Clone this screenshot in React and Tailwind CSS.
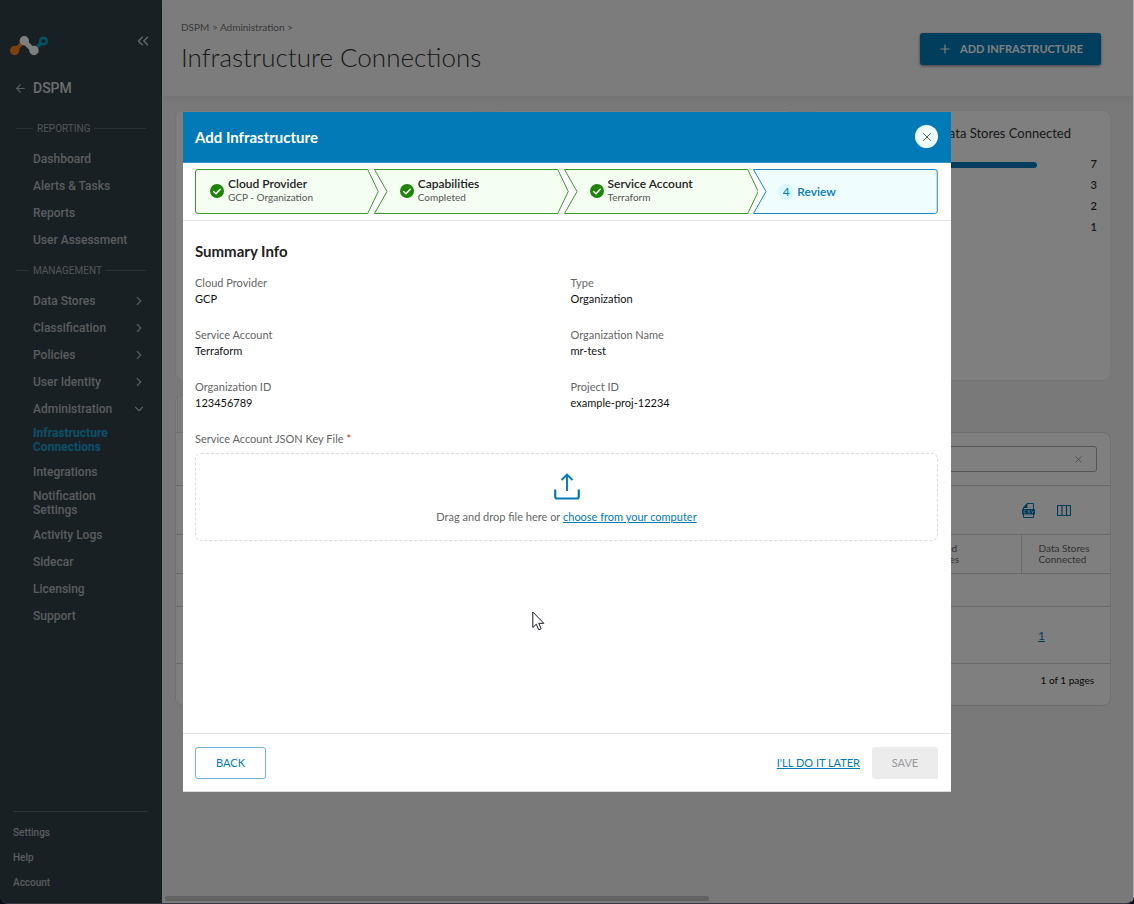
import { useState } from 'react'
import { ArrowLeft, ChevronDown, ChevronRight, ChevronsLeft, Plus, X } from 'lucide-react'

const reporting = ['Dashboard', 'Alerts & Tasks', 'Reports', 'User Assessment']
const management = ['Data Stores', 'Classification', 'Policies', 'User Identity']
const administration = [
  'Infrastructure Connections',
  'Integrations',
  'Notification Settings',
  'Activity Logs',
  'Sidecar',
  'Licensing',
  'Support',
]
const bottomLinks = ['Settings', 'Help', 'Account']
const connected = [7, 3, 2, 1]

const steps = [
  { title: 'Cloud Provider', note: 'GCP - Organization' },
  { title: 'Capabilities', note: 'Completed' },
  { title: 'Service Account', note: 'Terraform' },
  { title: 'Review' },
]

const summary = [
  ['Cloud Provider', 'GCP'],
  ['Type', 'Organization'],
  ['Service Account', 'Terraform'],
  ['Organization Name', 'mr-test'],
  ['Organization ID', '123456789'],
  ['Project ID', 'example-proj-12234'],
]

function Logo() {
  return (
    <svg width="38" height="20" viewBox="0 0 38 20" aria-hidden="true">
      <path d="M5 14.500L13 6" stroke="#f58220" strokeWidth="4" />
      <circle cx="4.700" cy="14.500" r="4.700" fill="#f58220" />
      <path d="M24 14L31 7" stroke="#00a5c8" strokeWidth="3.500" />
      <circle cx="33.500" cy="5" r="3.300" fill="none" stroke="#00a5c8" strokeWidth="2.600" />
      <path d="M14 5L24 15" stroke="#fff" strokeWidth="5" />
      <circle cx="14.300" cy="4.700" r="4.700" fill="#fff" />
      <circle cx="24" cy="14.500" r="4.700" fill="#fff" />
    </svg>
  )
}

function SectionLabel({ children, indent }) {
  return (
    <div className="flex h-[34px] items-center text-[10px] text-[#a2a8ab]">
      <span className={`h-px bg-[#57646a] ${indent ? 'w-[17px]' : 'w-[13px]'}`} />
      <h2 className="px-1">{children}</h2>
      <span className="h-px flex-1 bg-[#57646a]" />
    </div>
  )
}

function NavItem({ label, active, icon: Icon }) {
  return (
    <li>
      <a
        href="#"
        className={`flex min-h-[27px] items-center justify-between py-1 pl-[17px] text-[12px] leading-[14px] ${active ? 'font-extrabold text-[#1a9acb]' : 'font-medium text-[#b4b8ba]'}`}
      >
        <span className="max-w-[100px]">{label}</span>
        {Icon && <Icon size={14} />}
      </a>
    </li>
  )
}

function Sidebar() {
  return (
    <aside className="flex w-[162px] shrink-0 flex-col bg-[#324148] font-['Roboto',sans-serif]">
      <div className="flex h-[65px] items-start justify-between pt-9 pr-2.5 pl-2.5">
        <Logo />
        <button aria-label="Collapse menu" className="-mt-1 text-[#c8cccd]">
          <ChevronsLeft size={18} />
        </button>
      </div>
      <a href="#" className="flex h-[46px] items-center gap-1.5 pl-3.5 text-[14px] font-medium text-[#d8dadb]">
        <ArrowLeft size={13} className="text-[#b4b8ba]" />
        DSPM
      </a>
      <nav className="pr-4 pl-4">
        <SectionLabel indent>REPORTING</SectionLabel>
        <ul>
          {reporting.map(label => <NavItem key={label} label={label} />)}
        </ul>
        <SectionLabel>MANAGEMENT</SectionLabel>
        <ul>
          {management.map(label => <NavItem key={label} label={label} icon={ChevronRight} />)}
          <NavItem label="Administration" icon={ChevronDown} />
          {administration.map((label, i) => <NavItem key={label} label={label} active={i === 0} />)}
        </ul>
      </nav>
      <ul className="mt-auto mr-3.5 mb-2 ml-[13px] border-t border-[#5a686e] pt-2">
        {bottomLinks.map(label => (
          <li key={label}>
            <a href="#" className="flex h-[25px] items-center text-[10px] font-medium text-[#b4b8ba]">{label}</a>
          </li>
        ))}
      </ul>
    </aside>
  )
}

function CsvIcon() {
  return (
    <svg width="13" height="15" viewBox="0 0 13 15" fill="none" aria-hidden="true">
      <path d="M1.500 6V4.500L5 .500h6.500V6M1.500 11v3.500h10V11" stroke="#0379b7" />
      <path d="M1 5L5.500 0v5z" fill="#0379b7" />
      <path d="M0 6h13v5.500H0z" fill="#0379b7" />
      <path d="M4 7.500H2v2.500h2M8 7.500H6v1h1.500V10H5.500M9.500 7.500l1 2.500 1-2.500" stroke="#fff" strokeWidth=".5" />
    </svg>
  )
}

function ColumnsIcon() {
  return (
    <svg width="14" height="11" viewBox="0 0 14 11" fill="none" stroke="#0379b7" aria-hidden="true">
      <path d="M.500.500h13v10H.500zM5 .500v10M9.500.500v10" strokeWidth="1.200" />
    </svg>
  )
}

function Page() {
  return (
    <main className="flex min-w-0 flex-1 flex-col bg-[#f2f2f2]">
      <header className="flex h-24 shrink-0 items-center justify-between bg-[#f9f9f9] pr-8 pl-[19px] shadow-[0_2px_10px_rgba(0,0,0,0.06)]">
        <div className="pb-1">
          <p className="text-[10px] leading-4 text-[#777]">DSPM &gt; Administration &gt;</p>
          <h1 className="pt-1.5 text-[26px] leading-8 font-light text-[#333]">Infrastructure Connections</h1>
        </div>
        <button className="mt-0.5 flex h-8 items-center gap-2 rounded-[3px] bg-[#037ab8] px-[18px] text-[11px] font-bold text-white shadow-[0_1px_3px_rgba(0,0,0,0.5)]">
          <Plus size={14} />
          ADD INFRASTRUCTURE
        </button>
      </header>

      <div className="pt-3.5 pr-[22px] pl-[13px]">
        <div className="grid grid-cols-3 gap-3">
          <section className="h-[271px] rounded-lg border border-[#ebebeb] bg-white" />
          <section className="h-[271px] rounded-lg border border-[#ebebeb] bg-white" />
          <section className="h-[271px] rounded-lg border border-[#ebebeb] bg-white pt-3 pr-[13px] pl-3">
            <h2 className="pr-[26px] text-right text-[13px] leading-5 text-[#333]">Data Stores Connected</h2>
            <ul className="pt-[11px]">
              {connected.map(n => (
                <li key={n} className="flex h-[21px] items-center">
                  <span className="flex-1">
                    <span className="block h-1.5 rounded-full bg-[#037ab8]" style={{ width: `${(n / 7) * 100}%` }} />
                  </span>
                  <span className="w-[60px] text-right text-[11px] font-semibold text-[#333]">{n}</span>
                </li>
              ))}
            </ul>
          </section>
        </div>

        <div className="mt-[13px] h-[38px] w-40 rounded-t-lg border border-b-0 border-[#e6e6e6] bg-[#f9f9f9]" />
        <section className="rounded-b-lg rounded-tr-lg border border-[#dedede] bg-white">
          <div className="flex h-[52px] items-center px-[13px]">
            <div className="flex h-[26px] flex-1 items-center rounded-[3px] border border-[#aaa] pr-3">
              <input aria-label="Search" className="min-w-0 flex-1 outline-none" />
              <button aria-label="Clear search" className="text-[#999]"><X size={11} /></button>
            </div>
          </div>
          <div className="flex h-[49px] items-center justify-end gap-[22px] border-t border-[#d4d4d4] pr-[39px]">
            <button aria-label="Export CSV"><CsvIcon /></button>
            <button aria-label="Choose columns"><ColumnsIcon /></button>
          </div>
          <table className="w-full text-left text-[10px] leading-[11px] text-[#666]">
            <thead>
              <tr className="h-[39px] border-y border-[#d4d4d4]">
                <th className="font-normal" />
                <th className="w-[130px] pl-[17px] font-normal">Discovered<br />Data Stores</th>
                <th className="w-[89px] border-l border-[#d4d4d4] pl-[17px] font-normal">Data Stores<br />Connected</th>
              </tr>
            </thead>
            <tbody>
              <tr className="h-[33px] border-b border-[#d4d4d4]"><td /><td /><td /></tr>
              <tr className="h-[57px] border-b border-[#d4d4d4]">
                <td />
                <td />
                <td className="pl-[17px] text-[12px]"><a href="#" className="text-[#037ab8] underline">1</a></td>
              </tr>
            </tbody>
          </table>
          <p className="flex h-[41px] items-center justify-end pr-4 pb-2 text-[10px] text-[#111]">1 of 1 pages</p>
        </section>
      </div>

      <div className="mt-auto mb-0.5 ml-[3px] h-[5px] w-[56%] rounded-full bg-[#c4c4c4]" />
    </main>
  )
}

// Chevron outlines stretch with the step, the stroke keeps its width
const shapes = {
  first: { box: '0 0 184 45', d: 'M3 .5H173L183.500 22.500L173 44.500H3Q.5 44.500 .5 42V3Q.5 .5 3 .5Z' },
  middle: { box: '0 0 195 45', d: 'M.500 .5H184L194.500 22.500L184 44.500H.5L13 22.500Z' },
  last: { box: '0 0 185 45', d: 'M.500 .5H182Q184.500 .5 184.500 3V42Q184.500 44.500 182 44.500H.5L13 22.500Z' },
}

function Step({ step, index }) {
  const isFirst = index === 0
  const isLast = index === steps.length - 1
  const shape = isFirst ? shapes.first : isLast ? shapes.last : shapes.middle
  return (
    <li
      className={`relative flex h-[45px] items-center ${isFirst ? 'flex-[184_1_0%]' : isLast ? '-ml-[5px] flex-[185_1_0%]' : '-ml-[5px] flex-[195_1_0%]'}`}
      aria-current={isLast ? 'step' : undefined}
    >
      <svg className="absolute inset-0 h-full w-full" viewBox={shape.box} preserveAspectRatio="none" aria-hidden="true">
        <path d={shape.d} fill={isLast ? '#effdff' : '#f4fff1'} stroke={isLast ? '#1f86bd' : '#3a982b'} vectorEffect="non-scaling-stroke" />
      </svg>
      {isLast ? (
        <div className="relative flex items-center gap-[3px] pl-[25px] text-[12px] text-[#037ab8]">
          <span className="flex h-4 w-4 items-center justify-center rounded-full bg-[#d9f8ff]">4</span>
          <span className="font-semibold">{step.title}</span>
        </div>
      ) : (
        <div className={`relative flex items-center gap-1 pb-0.5 ${isFirst ? 'pl-[15px]' : 'pl-[26px]'}`}>
          <svg width="14" height="14" viewBox="0 0 14 14" fill="none" aria-hidden="true">
            <circle cx="7" cy="7" r="7" fill="#1e8508" />
            <path d="M3.300 7.200L6 9.700L10.700 4.700" stroke="#fff" strokeWidth="1.500" />
          </svg>
          <div>
            <p className="text-[12px] leading-[14px] font-semibold text-[#222]">{step.title}</p>
            <p className="text-[10px] leading-[13px] text-[#555]">{step.note}</p>
          </div>
        </div>
      )}
    </li>
  )
}

function Modal({ onClose }) {
  return (
    <div role="dialog" aria-labelledby="modal-title" className="relative flex min-h-[680px] w-full max-w-3xl flex-col border-b border-[#ddd] bg-white">
      <header className="flex h-[51px] items-center justify-between border-b border-[#2f8fc4] bg-[#037ab8] pr-[13px] pb-px pl-3">
        <h2 id="modal-title" className="text-[15px] leading-5 font-bold text-white">Add Infrastructure</h2>
        <button aria-label="Close" onClick={onClose} className="flex h-[23px] w-[23px] items-center justify-center rounded-full bg-[#effdff] text-[#444]">
          <X size={14} strokeWidth={1.5} />
        </button>
      </header>

      <ol className="flex border-b border-[#e2e2e2] py-1.5 pr-[13px] pl-3">
        {steps.map((step, i) => <Step key={step.title} step={step} index={i} />)}
      </ol>

      <div className="flex-1 pt-5 pr-[13px] pl-3 text-[11px] leading-4">
        <h3 className="text-[15px] leading-5 font-bold text-[#222]">Summary Info</h3>
        <dl className="grid grid-cols-2 gap-x-2 gap-y-5 pt-3.5">
          {summary.map(([label, value]) => (
            <div key={label}>
              <dt className="text-[#666]">{label}</dt>
              <dd className="text-[#111]">{value}</dd>
            </div>
          ))}
        </dl>
        <p className="pt-5 text-[#666]">Service Account JSON Key File <span className="text-[#e02020]">*</span></p>
        <div className="mt-1.5 flex h-[88px] flex-col items-center rounded-md border border-dashed border-[#ddd] pt-[19px] text-[#666]">
          <svg width="26" height="27" viewBox="0 0 26 27" fill="none" stroke="#037ab8" aria-hidden="true">
            <path d="M1.200 16.500V23.500Q1.200 25.500 3.200 25.500H22.800Q24.800 25.500 24.800 23.500V16.500" strokeWidth="2.200" />
            <path d="M13 18V1.500M7.500 7L13 1.500L18.500 7" strokeWidth="1.900" />
          </svg>
          <p className="pt-[9px]">
            Drag and drop file here or{' '}
            <a href="#" className="text-[#037ab8] underline">choose from your computer</a>
          </p>
        </div>
      </div>

      <footer className="flex items-center border-t border-[#e2e2e2] pt-[13px] pr-[13px] pb-3 pl-3 text-[11px]">
        <button className="h-8 w-[71px] rounded-[3px] border border-[#6fb3d7] text-[#037ab8]">BACK</button>
        <a href="#" className="mr-3 ml-auto text-[#037ab8] underline">I'LL DO IT LATER</a>
        <button disabled className="h-8 w-[66px] rounded-[3px] bg-[#ececec] text-[#999]">SAVE</button>
      </footer>

      {/* mouse pointer */}
      <svg className="pointer-events-none absolute top-[499px] left-[349px]" width="13" height="20" viewBox="0 0 13 20" aria-hidden="true">
        <path d="M.8 1V16.500L4.300 13.200L6.800 18.800L9.200 17.700L6.800 12.300H11.800Z" fill="#fff" stroke="#1a1a2a" />
      </svg>
    </div>
  )
}

export default function App() {
  const [open, setOpen] = useState(true)
  return (
    <div className="flex min-h-screen bg-[#0c0b18] font-['Lato',sans-serif]">
      <div className="relative flex min-w-0 flex-1 overflow-hidden rounded-b-lg border-r border-b border-r-[#b0b0b0] border-b-[#3a3844]">
        <Sidebar />
        <Page />
        {open && <div className="absolute inset-0 bg-black/50" />}
      </div>
      {open && (
        <div className="fixed inset-0 flex items-center justify-center">
          <Modal onClose={() => setOpen(false)} />
        </div>
      )}
    </div>
  )
}
